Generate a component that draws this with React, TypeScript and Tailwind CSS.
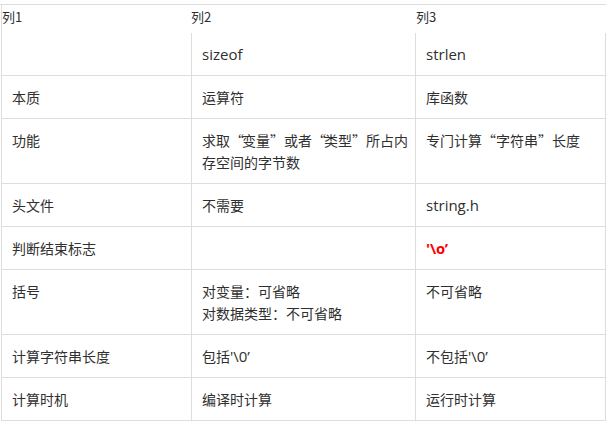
import React from "react";

const CJK = { fontFamily: '"Noto Sans CJK SC", "Noto Sans", sans-serif' };

function Lat({ children }: { children: React.ReactNode }) {
  return (
    <span className="font-['Open_Sans','Noto_Sans',sans-serif] text-[15px]">{children}</span>
  );
}

type Row = { c: React.ReactNode[]; tall?: boolean };

const rows: Row[] = [
  { c: ["", <Lat>sizeof</Lat>, <Lat>strlen</Lat>] },
  { c: ["本质", "运算符", "库函数"] },
  {
    tall: true,
    c: [
      "功能",
      <>
        <span className="whitespace-nowrap">
          求取<span className="tracking-[-2px]">“</span>变量”或者<span className="tracking-[-2px]">“</span>类型”所占内
        </span>
        <br />
        存空间的字节数
      </>,
      <span className="whitespace-nowrap">专门计算“字符串”长度</span>,
    ],
  },
  { c: ["头文件", "不需要", <Lat>string.h</Lat>] },
  {
    c: [
      "判断结束标志",
      "",
      <span className="font-['Open_Sans',sans-serif] text-[15px] font-bold text-[#ff0000] oldstyle-nums">
        '\0’
      </span>,
    ],
  },
  {
    tall: true,
    c: [
      "括号",
      <>
        对变量：可省略
        <br />
        对数据类型：不可省略
      </>,
      "不可省略",
    ],
  },
  {
    c: [
      "计算字符串长度",
      <>
        包括<Lat>'\0’</Lat>
      </>,
      <>
        不包括<Lat>'\0’</Lat>
      </>,
    ],
  },
  { c: ["计算时机", "编译时计算", "运行时计算"] },
];

export default function App() {
  const widths = ["w-[190px]", "w-[224px]", "w-[190px]"];
  return (
    <div
      className="w-[607px] h-[421px] bg-white text-[#2f2f2f] overflow-hidden pt-[4px]"
      style={CJK}
    >
      <div className="w-[606px] border-t border-[#dddddd]">
        <div className="ml-[1px] w-[605px] border-l border-[#dddddd]">
          <div className="flex h-[28px] pt-[2px] text-[13px] leading-[20px]">
            <div className="w-[189px]">列1</div>
            <div className="w-[225px]">列2</div>
            <div className="flex-1">列3</div>
          </div>
          {rows.map((r, i) => (
            <div key={i} className="flex border-b border-[#dddddd]">
              {r.c.map((cell, j) => (
                <div
                  key={j}
                  className={`${widths[j]} ${
                    r.tall ? "h-[64px]" : "h-[42px]"
                  } border-r border-[#dddddd] pl-[10px] pr-[4px] py-[10px] text-[14px] leading-[22px]`}
                >
                  {cell}
                </div>
              ))}
            </div>
          ))}
        </div>
      </div>
    </div>
  );
}
